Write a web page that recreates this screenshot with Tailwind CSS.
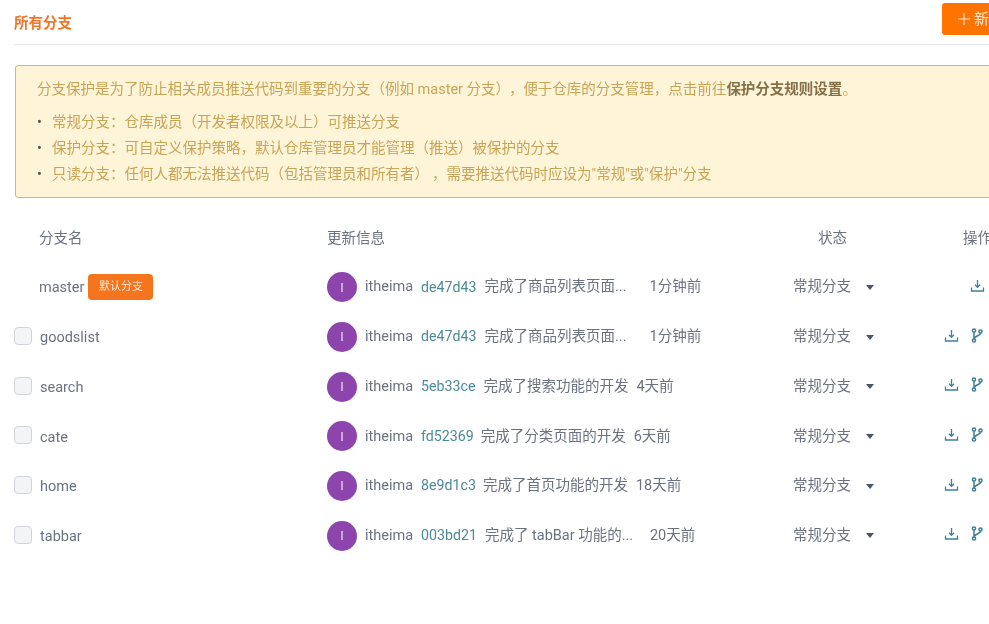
<!DOCTYPE html>
<html lang="zh">
<head>
<meta charset="UTF-8">
<title>所有分支</title>
<script src="https://cdn.jsdelivr.net/npm/@tailwindcss/browser@4"></script>
</head>
<body class="bg-white overflow-hidden font-['Roboto','Noto_Sans_CJK_SC',sans-serif] text-[14.5px] text-[#6b7280]">
<div class="w-[989px] h-[624px] overflow-hidden blur-[0.3px]">
  <div class="w-[1060px] pl-[14px]">

    <!-- header -->
    <div class="h-[45px] pt-[3px] flex justify-between items-start border-b border-[#e5e7eb]">
      <h1 class="mt-[11px] text-[14.5px] font-bold leading-5 text-[#f0762a]">所有分支</h1>
      <div class="w-[118px] h-[32px] rounded-[3px] bg-[#ff7300] text-[#fde6cf] text-[15px] flex items-center pl-[15px] gap-[3px]">
        <svg width="14" height="14" viewBox="0 0 14 14" fill="none" stroke="#fde6cf" stroke-width="1.2"><path d="M7 1v12M1 7h12"/></svg>
        <span>新建分支</span>
      </div>
    </div>

    <!-- alert -->
    <div class="mt-[20px] ml-[1px] h-[133px] rounded-[3px] border border-[#d9b56a] bg-[#fef4d8] text-[#c9a356] pl-[21px] pt-[13px]">
      <p class="h-[22px] leading-[22px]">分支保护是为了防止相关成员推送代码到重要的分支（例如 master 分支）<span class="ml-[6px]">，</span>便于仓库的分支管理，点击前往<b class="font-bold text-[#85704a]">保护分支规则设置</b>。</p>
      <ul class="mt-[9px]">
        <li class="h-[26px] leading-[26px] flex"><span class="w-[15px] text-[#55504a]">•</span>常规分支：仓库成员（开发者权限及以上）可推送分支</li>
        <li class="h-[26px] leading-[26px] flex"><span class="w-[15px] text-[#55504a]">•</span>保护分支：可自定义保护策略，默认仓库管理员才能管理（推送）被保护的分支</li>
        <li class="h-[26px] leading-[26px] flex"><span class="w-[15px] text-[#55504a]">•</span>只读分支：任何人都无法推送代码（包括管理员和所有者）<span class="ml-[3px]">，</span>需要推送代码时应设为"常规"或"保护"分支</li>
      </ul>
    </div>

    <!-- table head -->
    <div class="mt-[24px] h-[34px] flex items-center text-[#6b7280]">
      <span class="ml-[25px] w-[288px]">分支名</span>
      <span class="w-[491px]">更新信息</span>
      <span class="w-[145px]">状态</span>
      <span>操作</span>
    </div>

    <!-- rows -->
    <div class="mt-[6.5px]">
      <div class="h-[49.7px] flex items-center">
        <span class="w-[25px]"></span>
        <span class="w-[288px] flex items-center"><span class="translate-y-[1px]">master</span><span class="ml-[4px] h-[26px] w-[65px] rounded-[4px] bg-[#f5751f] text-[#fde8d6] text-[11px] flex items-center justify-center">默认分支</span></span>
        <span class="w-[466px] flex items-center">
          <span class="w-[30px] h-[30px] rounded-full bg-[#8e44ad] text-white/80 text-[13px] flex items-center justify-center mr-[8px]">I</span>itheima<span class="ml-[8px] text-[14.2px] text-[#4c8a9a]">de47d43</span><span class="ml-[8px] w-[165px]">完成了商品列表页面...</span>1分钟前
        </span>
        <span class="w-[145px] flex items-center">常规分支<svg class="ml-[15px]" width="8" height="5" viewBox="0 0 8 5"><path d="M0 0h8L4 5z" fill="#4b5563"/></svg></span>
        <span class="w-[47px] flex justify-end -translate-y-[2px]"><svg width="15" height="15" viewBox="0 0 15 15" fill="none" stroke="#3f7f96" stroke-width="1.3"><path d="M7.5 2v7M5 6.8l2.5 2.6L10 6.8M1.5 9.5v3.5h12V9.5"/></svg></span>
      </div>

      <div class="h-[49.7px] flex items-center">
        <span class="w-[18px] h-[18px] rounded-[4px] border border-[#d1d5db] bg-[#f3f4f6] mr-[8px] -translate-y-[1px]"></span>
        <span class="w-[287px] translate-y-[1px]">goodslist</span>
        <span class="w-[466px] flex items-center">
          <span class="w-[30px] h-[30px] rounded-full bg-[#8e44ad] text-white/80 text-[13px] flex items-center justify-center mr-[8px]">I</span>itheima<span class="ml-[8px] text-[14.2px] text-[#4c8a9a]">de47d43</span><span class="ml-[8px] w-[165px]">完成了商品列表页面...</span>1分钟前
        </span>
        <span class="w-[145px] flex items-center">常规分支<svg class="ml-[15px]" width="8" height="5" viewBox="0 0 8 5"><path d="M0 0h8L4 5z" fill="#4b5563"/></svg></span>
        <span class="flex justify-end gap-[12px] -ml-[20px] w-[65px] -translate-y-[2px]"><svg width="15" height="15" viewBox="0 0 15 15" fill="none" stroke="#3f7f96" stroke-width="1.3"><path d="M7.5 2v7M5 6.8l2.5 2.6L10 6.8M1.5 9.5v3.5h12V9.5"/></svg><svg width="12" height="15" viewBox="0 0 12 15" fill="none" stroke="#3f7f96" stroke-width="1.5"><circle cx="3" cy="2.5" r="1.6"/><circle cx="3" cy="12.5" r="1.6"/><circle cx="9.5" cy="3.5" r="1.6"/><path d="M3 4v7M9.5 5c0 3-6.5 3-6.5 6"/></svg></span>
      </div>

      <div class="h-[49.7px] flex items-center">
        <span class="w-[18px] h-[18px] rounded-[4px] border border-[#d1d5db] bg-[#f3f4f6] mr-[8px] -translate-y-[1px]"></span>
        <span class="w-[287px] translate-y-[1px]">search</span>
        <span class="w-[466px] flex items-center">
          <span class="w-[30px] h-[30px] rounded-full bg-[#8e44ad] text-white/80 text-[13px] flex items-center justify-center mr-[8px]">I</span>itheima<span class="ml-[8px] text-[14.2px] text-[#4c8a9a]">5eb33ce</span><span class="ml-[8px] mr-[8px]">完成了搜索功能的开发</span>4天前
        </span>
        <span class="w-[145px] flex items-center">常规分支<svg class="ml-[15px]" width="8" height="5" viewBox="0 0 8 5"><path d="M0 0h8L4 5z" fill="#4b5563"/></svg></span>
        <span class="flex justify-end gap-[12px] -ml-[20px] w-[65px] -translate-y-[2px]"><svg width="15" height="15" viewBox="0 0 15 15" fill="none" stroke="#3f7f96" stroke-width="1.3"><path d="M7.5 2v7M5 6.8l2.5 2.6L10 6.8M1.5 9.5v3.5h12V9.5"/></svg><svg width="12" height="15" viewBox="0 0 12 15" fill="none" stroke="#3f7f96" stroke-width="1.5"><circle cx="3" cy="2.5" r="1.6"/><circle cx="3" cy="12.5" r="1.6"/><circle cx="9.5" cy="3.5" r="1.6"/><path d="M3 4v7M9.5 5c0 3-6.5 3-6.5 6"/></svg></span>
      </div>

      <div class="h-[49.7px] flex items-center">
        <span class="w-[18px] h-[18px] rounded-[4px] border border-[#d1d5db] bg-[#f3f4f6] mr-[8px] -translate-y-[1px]"></span>
        <span class="w-[287px] translate-y-[1px]">cate</span>
        <span class="w-[466px] flex items-center">
          <span class="w-[30px] h-[30px] rounded-full bg-[#8e44ad] text-white/80 text-[13px] flex items-center justify-center mr-[8px]">I</span>itheima<span class="ml-[8px] text-[14.2px] text-[#4c8a9a]">fd52369</span><span class="ml-[7px] mr-[8px]">完成了分类页面的开发</span>6天前
        </span>
        <span class="w-[145px] flex items-center">常规分支<svg class="ml-[15px]" width="8" height="5" viewBox="0 0 8 5"><path d="M0 0h8L4 5z" fill="#4b5563"/></svg></span>
        <span class="flex justify-end gap-[12px] -ml-[20px] w-[65px] -translate-y-[2px]"><svg width="15" height="15" viewBox="0 0 15 15" fill="none" stroke="#3f7f96" stroke-width="1.3"><path d="M7.5 2v7M5 6.8l2.5 2.6L10 6.8M1.5 9.5v3.5h12V9.5"/></svg><svg width="12" height="15" viewBox="0 0 12 15" fill="none" stroke="#3f7f96" stroke-width="1.5"><circle cx="3" cy="2.5" r="1.6"/><circle cx="3" cy="12.5" r="1.6"/><circle cx="9.5" cy="3.5" r="1.6"/><path d="M3 4v7M9.5 5c0 3-6.5 3-6.5 6"/></svg></span>
      </div>

      <div class="h-[49.7px] flex items-center">
        <span class="w-[18px] h-[18px] rounded-[4px] border border-[#d1d5db] bg-[#f3f4f6] mr-[8px] -translate-y-[1px]"></span>
        <span class="w-[287px] translate-y-[1px]">home</span>
        <span class="w-[466px] flex items-center">
          <span class="w-[30px] h-[30px] rounded-full bg-[#8e44ad] text-white/80 text-[13px] flex items-center justify-center mr-[8px]">I</span>itheima<span class="ml-[8px] text-[14.2px] text-[#4c8a9a]">8e9d1c3</span><span class="ml-[7px] mr-[8px]">完成了首页功能的开发</span>18天前
        </span>
        <span class="w-[145px] flex items-center">常规分支<svg class="ml-[15px]" width="8" height="5" viewBox="0 0 8 5"><path d="M0 0h8L4 5z" fill="#4b5563"/></svg></span>
        <span class="flex justify-end gap-[12px] -ml-[20px] w-[65px] -translate-y-[2px]"><svg width="15" height="15" viewBox="0 0 15 15" fill="none" stroke="#3f7f96" stroke-width="1.3"><path d="M7.5 2v7M5 6.8l2.5 2.6L10 6.8M1.5 9.5v3.5h12V9.5"/></svg><svg width="12" height="15" viewBox="0 0 12 15" fill="none" stroke="#3f7f96" stroke-width="1.5"><circle cx="3" cy="2.5" r="1.6"/><circle cx="3" cy="12.5" r="1.6"/><circle cx="9.5" cy="3.5" r="1.6"/><path d="M3 4v7M9.5 5c0 3-6.5 3-6.5 6"/></svg></span>
      </div>

      <div class="h-[49.7px] flex items-center">
        <span class="w-[18px] h-[18px] rounded-[4px] border border-[#d1d5db] bg-[#f3f4f6] mr-[8px] -translate-y-[1px]"></span>
        <span class="w-[287px] translate-y-[1px]">tabbar</span>
        <span class="w-[466px] flex items-center">
          <span class="w-[30px] h-[30px] rounded-full bg-[#8e44ad] text-white/80 text-[13px] flex items-center justify-center mr-[8px]">I</span>itheima<span class="ml-[8px] text-[14.2px] text-[#4c8a9a]">003bd21</span><span class="ml-[8px] w-[165px]">完成了 tabBar 功能的...</span>20天前
        </span>
        <span class="w-[145px] flex items-center">常规分支<svg class="ml-[15px]" width="8" height="5" viewBox="0 0 8 5"><path d="M0 0h8L4 5z" fill="#4b5563"/></svg></span>
        <span class="flex justify-end gap-[12px] -ml-[20px] w-[65px] -translate-y-[2px]"><svg width="15" height="15" viewBox="0 0 15 15" fill="none" stroke="#3f7f96" stroke-width="1.3"><path d="M7.5 2v7M5 6.8l2.5 2.6L10 6.8M1.5 9.5v3.5h12V9.5"/></svg><svg width="12" height="15" viewBox="0 0 12 15" fill="none" stroke="#3f7f96" stroke-width="1.5"><circle cx="3" cy="2.5" r="1.6"/><circle cx="3" cy="12.5" r="1.6"/><circle cx="9.5" cy="3.5" r="1.6"/><path d="M3 4v7M9.5 5c0 3-6.5 3-6.5 6"/></svg></span>
      </div>
    </div>
  </div>
</div>
</body>
</html>
